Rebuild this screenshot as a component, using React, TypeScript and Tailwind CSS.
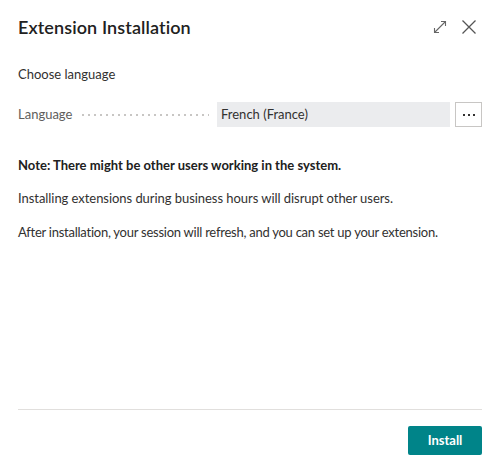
import React from "react";

export default function App() {
  const font = { fontFamily: 'Lato, "Noto Sans", sans-serif' };
  return (
    <div className="w-[500px] h-[472px] bg-white flex flex-col text-[#323130]" style={font}>
      <div className="h-[54px] flex items-center justify-between pl-[18px] pr-[24px]">
        <div className="text-[18px] font-semibold text-[#212121] tracking-[0.1px]">Extension Installation</div>
        <div className="flex items-center gap-[15px]">
          <svg width="14" height="14" viewBox="0 0 14 14" fill="none" stroke="#666" strokeWidth="1.1">
            <path d="M1.5 12.5 L12.5 1.5" />
            <path d="M8 1.5 H12.5 V6" />
            <path d="M1.5 8 V12.5 H6" />
          </svg>
          <svg width="14" height="14" viewBox="0 0 14 14" fill="none" stroke="#555" strokeWidth="1.3">
            <path d="M0.5 0.5 L13.5 13.5 M13.5 0.5 L0.5 13.5" />
          </svg>
        </div>
      </div>
      <div className="flex-1 flex flex-col px-[18px]">
        <div className="mt-[11px] text-[13px] leading-[18px]">Choose language</div>
        <div className="mt-[19px] flex items-center h-[25px]">
          <div className="text-[13px] text-[#605e5c] shrink-0">Language</div>
          <div className="flex-1 ml-[8px] mr-[8px] h-[2px] mt-[1px] bg-[radial-gradient(circle,#c8c6c4_0.8px,transparent_1px)] bg-[length:6px_2px]" />
          <div className="w-[233px] h-[25px] bg-[#ebecee] flex items-center px-[4px] text-[13px] text-[#323130]">French (France)</div>
          <div className="ml-[5px] w-[27px] h-[25px] border border-[#c8c6c4] bg-white flex items-center justify-center gap-[3px]">
            <span className="w-[2px] h-[2px] bg-[#323130]" />
            <span className="w-[2px] h-[2px] bg-[#323130]" />
            <span className="w-[2px] h-[2px] bg-[#323130]" />
          </div>
        </div>
        <div className="mt-[29px] text-[13px] leading-[18px] font-bold text-[#212121]">Note: There might be other users working in the system.</div>
        <div className="mt-[15px] text-[13px] leading-[18px] tracking-[-0.05px]">Installing extensions during business hours will disrupt other users.</div>
        <div className="mt-[16px] text-[13px] leading-[18px] tracking-[-0.25px]">After installation, your session will refresh, and you can set up your extension.</div>
      </div>
      <div className="mx-[18px] border-t border-[#e1dfdd]" />
      <div className="flex justify-end px-[18px] pt-[16px] pb-[17px]">
        <button className="w-[74px] h-[29px] bg-[#008489] rounded-[2px] text-white text-[13px] font-bold">Install</button>
      </div>
    </div>
  );
}
